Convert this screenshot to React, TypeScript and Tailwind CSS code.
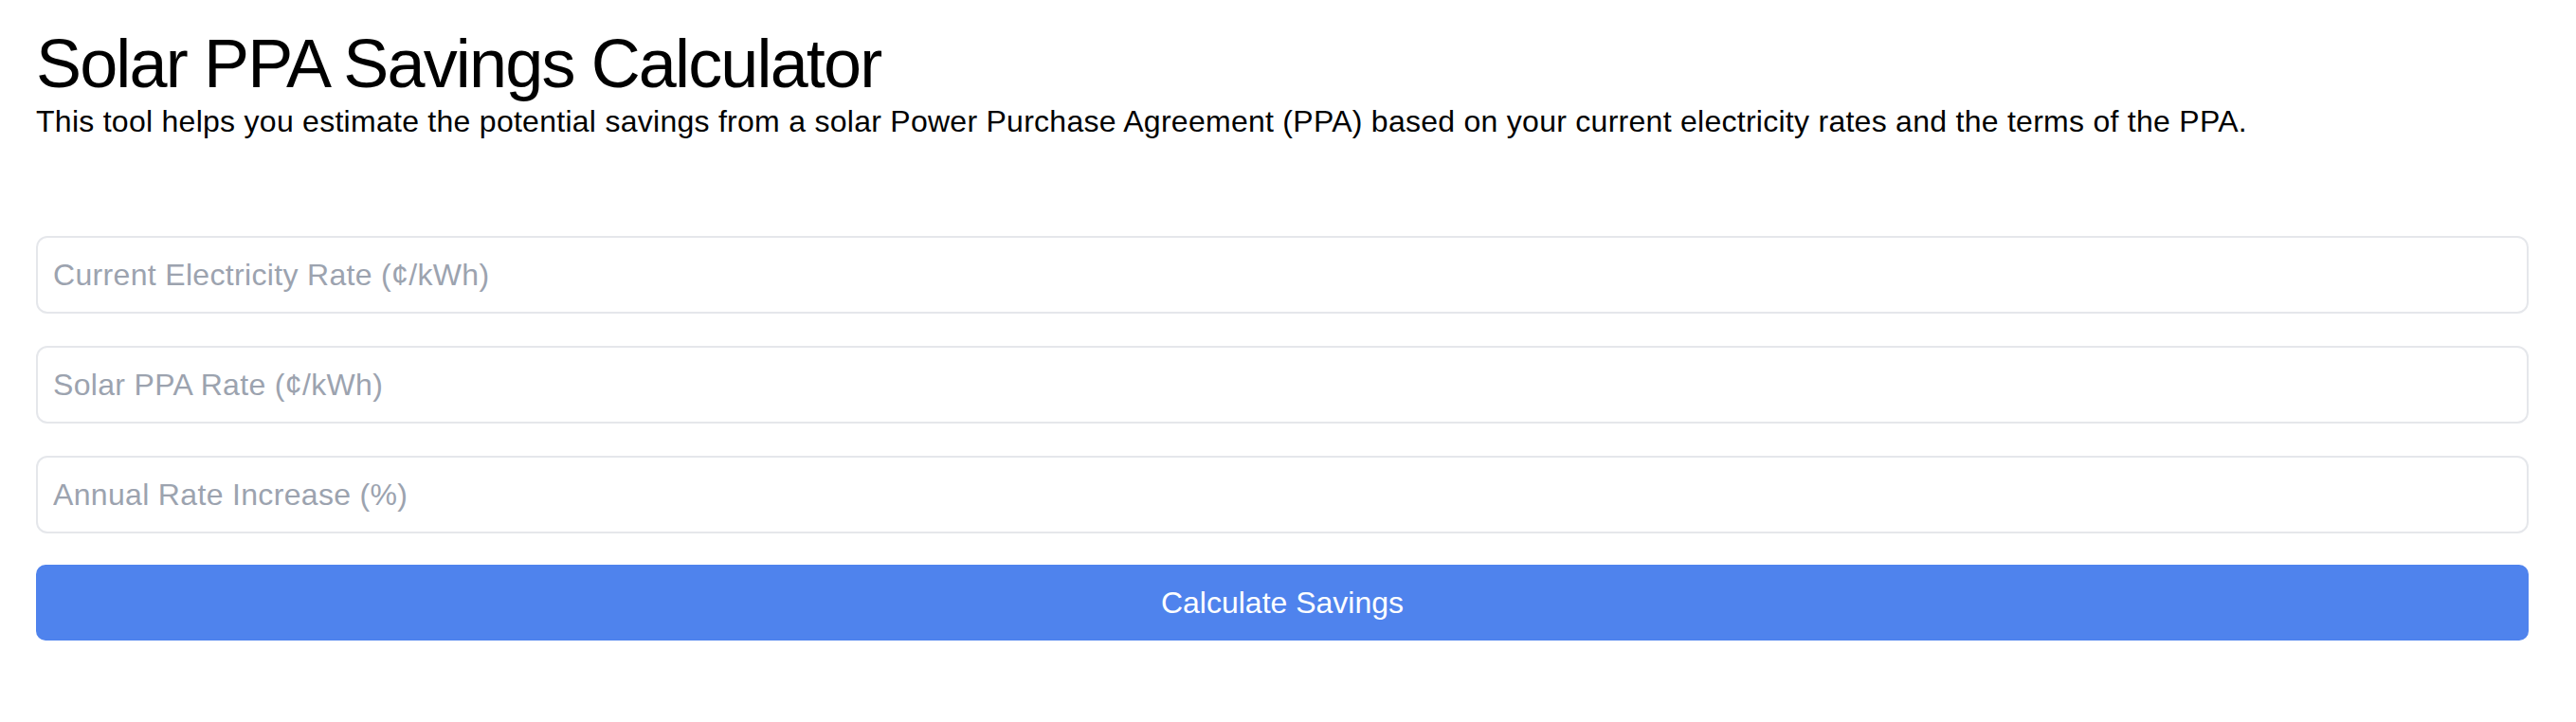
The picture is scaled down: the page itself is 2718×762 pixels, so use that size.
import { useState } from 'react';

const fields = [
  { key: 'current', placeholder: 'Current Electricity Rate (¢/kWh)' },
  { key: 'ppa', placeholder: 'Solar PPA Rate (¢/kWh)' },
  { key: 'increase', placeholder: 'Annual Rate Increase (%)' },
];

export default function App() {
  const [values, setValues] = useState<Record<string, string>>({});

  return (
    <div className="min-h-screen bg-white pl-[38px] pr-[50px] pt-[31px] font-['Liberation_Sans',Arial,sans-serif] text-black">
      <h1 className="text-[72px] leading-none tracking-[-1.85px]">Solar PPA Savings Calculator</h1>
      <p className="mt-px text-[32px] leading-[48px] tracking-[0.27px]">
        This tool helps you estimate the potential savings from a solar Power Purchase Agreement (PPA) based on your current electricity rates and the terms of the PPA.
      </p>

      <form className="mt-[97px] flex flex-col gap-[34px]" onSubmit={(e) => e.preventDefault()}>
        {fields.map((f) => (
          <input
            key={f.key}
            type="number"
            placeholder={f.placeholder}
            value={values[f.key] ?? ''}
            onChange={(e) => setValues({ ...values, [f.key]: e.target.value })}
            className="h-[82px] w-full rounded-[12px] border-2 border-[#e5e7eb] bg-white px-[16px] text-[32px] tracking-[0.33px] text-black outline-none placeholder:text-[#9ca3af]"
          />
        ))}
        <button
          type="submit"
          className="-mt-px h-[80px] w-full rounded-[10px] bg-[#4f83ed] text-[32px] text-white"
        >
          Calculate Savings
        </button>
      </form>
    </div>
  );
}
